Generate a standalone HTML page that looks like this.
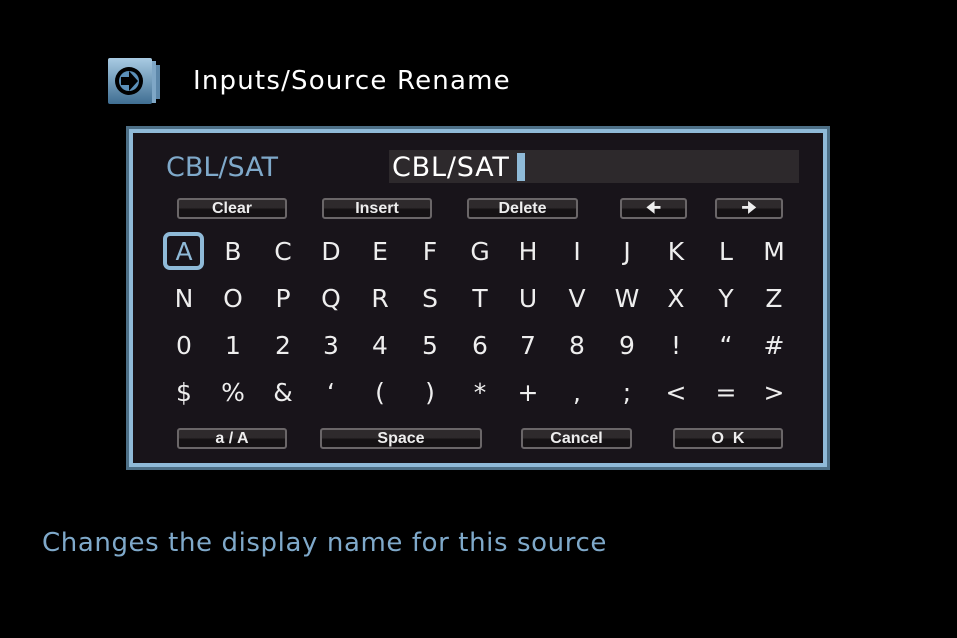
<!DOCTYPE html>
<html><head><meta charset="utf-8"><style>
body{margin:0;width:957px;height:638px;background:#000;overflow:hidden;position:relative;font-family:"DejaVu Sans","Liberation Sans",sans-serif;}
.a{position:absolute}
.panel{left:126px;top:126px;width:704px;height:344px;box-sizing:border-box;border:3px solid #4d6f86;background:#18141a;}
.panel:before{content:"";position:absolute;left:0;top:0;right:0;bottom:0;border:4px solid #8fbad8;}
.btn{position:absolute;height:21px;box-sizing:border-box;border:2px solid #6a6668;border-radius:3px;background:linear-gradient(#2e2a2c 0,#2e2a2c 45%,#151214 55%,#151214 100%);color:#eee;font:bold 16px/17px "Liberation Sans Narrow","Liberation Sans",sans-serif;text-align:center;}
.k{position:absolute;width:40px;margin-left:-20px;text-align:center;color:#eee;font-size:25px;line-height:30px;}
</style></head><body>
<svg class="a" style="left:107px;top:57px" width="56" height="48" viewBox="0 0 56 48">
<defs><linearGradient id="g" x1="0" y1="0" x2="0" y2="1"><stop offset="0" stop-color="#a9cbe3"/><stop offset="1" stop-color="#3f6e92"/></linearGradient></defs>
<rect x="49" y="8" width="4" height="34" fill="#5d88aa"/><rect x="44" y="4" width="5" height="42" fill="#7fa7c6"/>
<rect x="1" y="1" width="44" height="46" rx="2" fill="url(#g)"/>
<circle cx="22" cy="24" r="14" fill="#000"/><circle cx="22" cy="24" r="10" fill="#5b8fb8"/>
<path d="M14 20h8v-6l9 10-9 10v-6h-8z" fill="#000"/></svg>
<div class="a" style="left:193px;top:66px;color:#fff;font-size:26px;letter-spacing:1.2px">Inputs/Source Rename</div>
<div class="a panel"></div>
<div class="a" style="left:166px;top:152px;color:#7fa9ca;font-size:27px">CBL/SAT</div>
<div class="a" style="left:389px;top:150px;width:410px;height:33px;background:#2d292c"></div>
<div class="a" style="left:392px;top:152px;color:#fff;font-size:27px;letter-spacing:0.8px">CBL/SAT</div>
<div class="a" style="left:517px;top:153px;width:8px;height:28px;background:#8fbad8"></div>
<div class="btn" style="left:177px;top:198px;width:110px">Clear</div>
<div class="btn" style="left:322px;top:198px;width:110px">Insert</div>
<div class="btn" style="left:467px;top:198px;width:111px">Delete</div>
<div class="btn" style="left:620px;top:198px;width:67px">&#129032;</div>
<div class="btn" style="left:715px;top:198px;width:68px">&#129034;</div>
<div class="a" style="left:163px;top:232px;width:41px;height:38px;box-sizing:border-box;border:4px solid #8fbad8;border-radius:7px"></div>
<div class="btn" style="left:177px;top:428px;width:110px">a / A</div>
<div class="btn" style="left:320px;top:428px;width:162px">Space</div>
<div class="btn" style="left:521px;top:428px;width:111px">Cancel</div>
<div class="btn" style="left:673px;top:428px;width:110px">O&nbsp;&nbsp;K</div>
<div class="a" style="left:42px;top:528px;color:#7fa9ca;font-size:26px;letter-spacing:0.6px">Changes the display name for this source</div>
<div class="k" style="left:184px;top:237px;color:#8fbad8">A</div><div class="k" style="left:233px;top:237px">B</div><div class="k" style="left:283px;top:237px">C</div><div class="k" style="left:331px;top:237px">D</div><div class="k" style="left:380px;top:237px">E</div><div class="k" style="left:430px;top:237px">F</div><div class="k" style="left:480px;top:237px">G</div><div class="k" style="left:528px;top:237px">H</div><div class="k" style="left:577px;top:237px">I</div><div class="k" style="left:627px;top:237px">J</div><div class="k" style="left:676px;top:237px">K</div><div class="k" style="left:726px;top:237px">L</div><div class="k" style="left:774px;top:237px">M</div>
<div class="k" style="left:184px;top:284px">N</div><div class="k" style="left:233px;top:284px">O</div><div class="k" style="left:283px;top:284px">P</div><div class="k" style="left:331px;top:284px">Q</div><div class="k" style="left:380px;top:284px">R</div><div class="k" style="left:430px;top:284px">S</div><div class="k" style="left:480px;top:284px">T</div><div class="k" style="left:528px;top:284px">U</div><div class="k" style="left:577px;top:284px">V</div><div class="k" style="left:627px;top:284px">W</div><div class="k" style="left:676px;top:284px">X</div><div class="k" style="left:726px;top:284px">Y</div><div class="k" style="left:774px;top:284px">Z</div>
<div class="k" style="left:184px;top:331px">0</div><div class="k" style="left:233px;top:331px">1</div><div class="k" style="left:283px;top:331px">2</div><div class="k" style="left:331px;top:331px">3</div><div class="k" style="left:380px;top:331px">4</div><div class="k" style="left:430px;top:331px">5</div><div class="k" style="left:480px;top:331px">6</div><div class="k" style="left:528px;top:331px">7</div><div class="k" style="left:577px;top:331px">8</div><div class="k" style="left:627px;top:331px">9</div><div class="k" style="left:676px;top:331px">!</div><div class="k" style="left:726px;top:331px">“</div><div class="k" style="left:774px;top:331px">#</div>
<div class="k" style="left:184px;top:378px">$</div><div class="k" style="left:233px;top:378px">%</div><div class="k" style="left:283px;top:378px">&amp;</div><div class="k" style="left:331px;top:378px">‘</div><div class="k" style="left:380px;top:378px">(</div><div class="k" style="left:430px;top:378px">)</div><div class="k" style="left:480px;top:378px">*</div><div class="k" style="left:528px;top:378px">+</div><div class="k" style="left:577px;top:378px">,</div><div class="k" style="left:627px;top:378px">;</div><div class="k" style="left:676px;top:378px">&lt;</div><div class="k" style="left:726px;top:378px">=</div><div class="k" style="left:774px;top:378px">&gt;</div>
</body></html>
